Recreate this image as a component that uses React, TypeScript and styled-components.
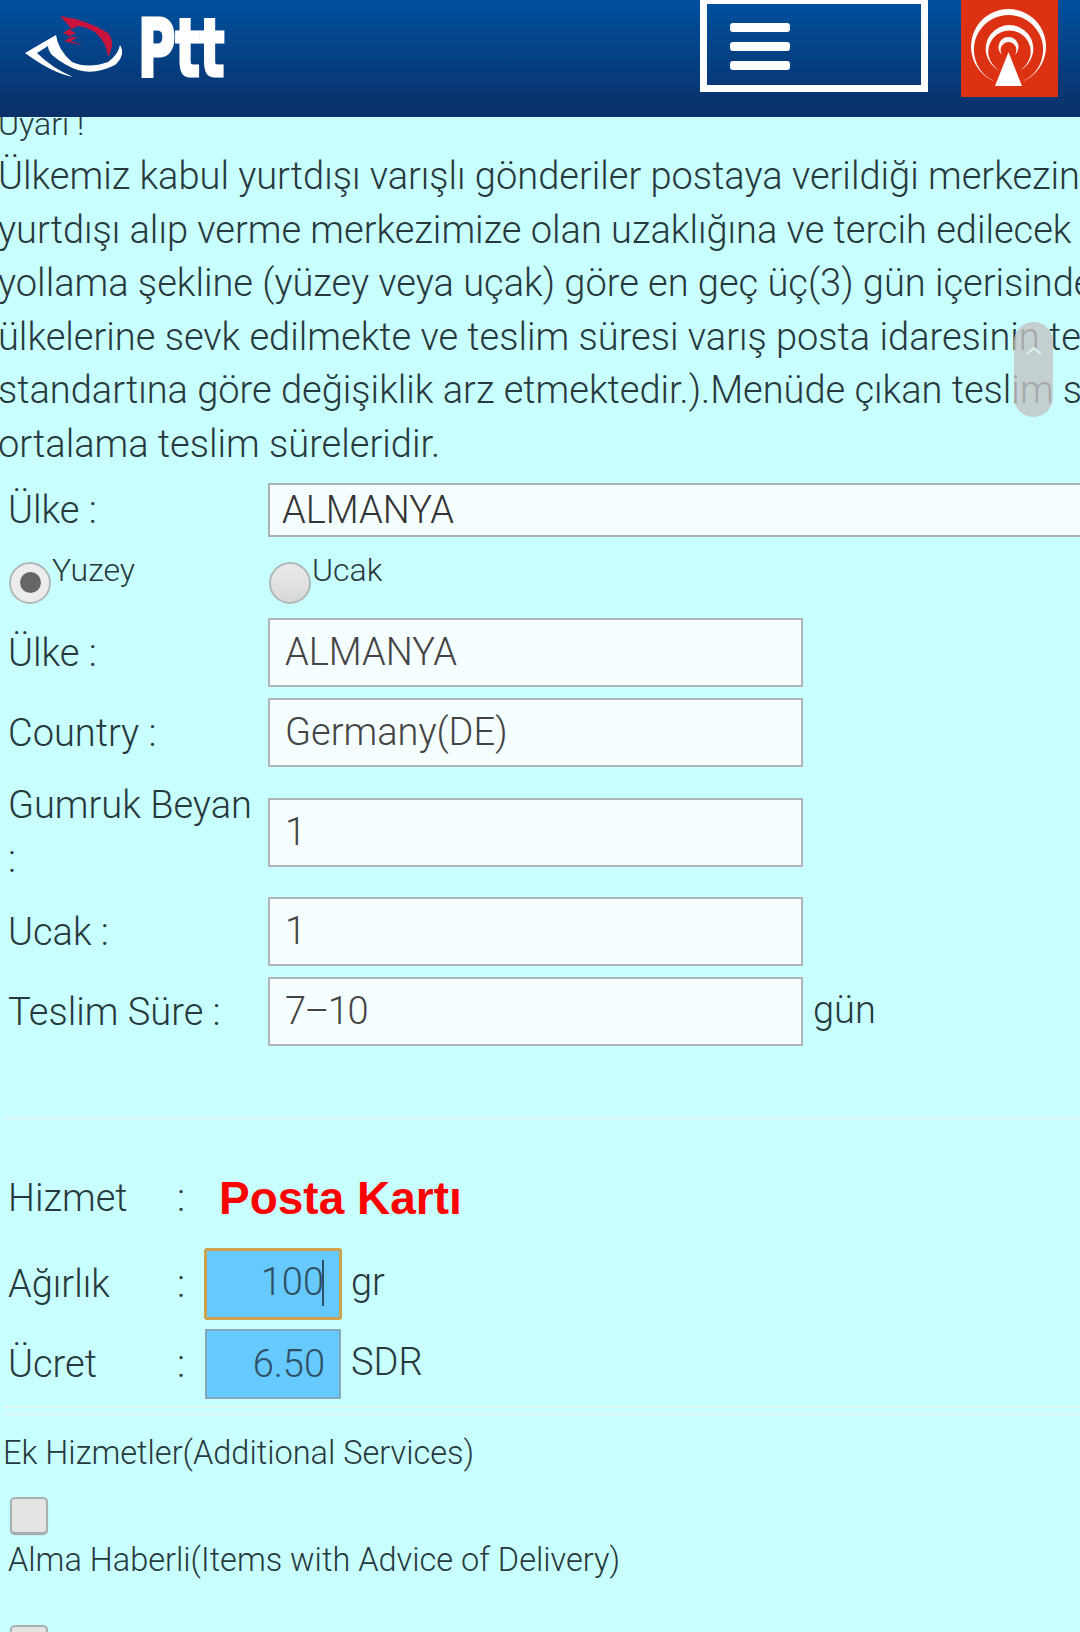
import { createGlobalStyle, styled } from 'styled-components';

const GlobalStyle = createGlobalStyle`
  html, body {
    margin: 0;
    padding: 0;
    background: #c8ffff;
    overflow: hidden;
  }
  body {
    width: 1080px;
    height: 1632px;
    font-family: Roboto, "Liberation Sans", sans-serif;
    font-weight: 300;
    color: #27393d;
  }
`;

const Page = styled.div`
  position: relative;
  width: 1080px;
  height: 1632px;
  overflow: hidden;
`;

const Header = styled.header`
  position: relative;
  z-index: 2;
  height: 117px;
  display: flex;
  align-items: flex-start;
  background: linear-gradient(#00509f, #0a3068);
`;

const Brand = styled.div`
  display: flex;
  align-items: flex-start;
  width: 700px;
  height: 92px;
  padding: 14px 0 0 22px;
  box-sizing: border-box;
`;

const BrandName = styled.span`
  margin: 3px 0 0 6px;
  font-family: "DejaVu Sans Condensed", "DejaVu Sans", sans-serif;
  font-weight: 700;
  font-size: 80px;
  line-height: 64px;
  color: #fff;
  -webkit-text-stroke: 3px #fff;
  transform: scaleX(0.71);
  transform-origin: left top;
`;

const MenuButton = styled.button`
  display: flex;
  flex-direction: column;
  gap: 10px;
  width: 228px;
  height: 92px;
  margin-right: 33px;
  padding: 19px 0 0 23px;
  box-sizing: border-box;
  background: transparent;
  border: 7px solid #fff;
  border-top-width: 4px;
`;

const MenuBar = styled.span`
  display: block;
  width: 60px;
  height: 9px;
  border-radius: 3px;
  background: #fff;
`;

const LiveButton = styled.div`
  width: 97px;
  height: 97px;
  background: #dc3213;
`;

const Content = styled.main`
  margin-top: -15px;
`;

const NoticeTitle = styled.div`
  margin: 0 0 4px -2px;
  font-size: 32px;
  line-height: 44px;
`;

const Notice = styled.p`
  margin: 0 0 8px -2px;
  font-size: 38px;
  line-height: 53.6px;
  white-space: nowrap;
`;

const FormRow = styled.div<{ $height: number }>`
  display: flex;
  align-items: center;
  height: ${(p) => p.$height}px;
  font-size: 38px;
`;

const FieldLabel = styled.label`
  box-sizing: border-box;
  flex: 0 0 268px;
  padding-left: 8px;
  line-height: 54px;
`;

const WideSelect = styled.div`
  box-sizing: border-box;
  flex: 0 0 900px;
  height: 54px;
  padding-left: 12px;
  line-height: 50px;
  color: #333;
  background: #f6ffff;
  border: 2px solid #aab0b0;
`;

const TextField = styled.div<{ $tight?: boolean }>`
  box-sizing: border-box;
  width: 535px;
  height: 69px;
  padding-left: 15px;
  line-height: 65px;
  letter-spacing: ${(p) => (p.$tight ? '-1.5px' : 'normal')};
  color: #444;
  background: #f6ffff;
  border: 2px solid #b0b4b4;
`;

const Suffix = styled.span<{ $gap: number }>`
  margin: 0 0 4px ${(p) => p.$gap}px;
`;

const RadioRow = styled.div`
  display: flex;
  height: 73px;
  font-size: 32px;
`;

const RadioOption = styled.div`
  display: flex;
  flex: 0 0 260px;
  gap: 1px;
  padding: 10px 0 0 9px;
  box-sizing: border-box;
  line-height: 40px;
`;

const RadioDot = styled.span<{ $checked?: boolean }>`
  box-sizing: border-box;
  display: flex;
  align-items: center;
  justify-content: center;
  width: 42px;
  height: 42px;
  margin-top: 12px;
  border-radius: 50%;
  border: 2px solid #b0b8b8;
  background: ${(p) => (p.$checked ? '#ececec' : 'linear-gradient(#eaeaea, #d8d8d8)')};

  &::after {
    content: '';
    display: ${(p) => (p.$checked ? 'block' : 'none')};
    width: 21px;
    height: 21px;
    border-radius: 50%;
    background: #666;
  }
`;

const Rule = styled.hr<{ $top: number }>`
  margin: ${(p) => p.$top}px 0 0 3px;
  height: 2px;
  border: 0;
  background: #dff3f3;
`;

const ServiceRow = styled.div<{ $height: number; $top?: number }>`
  display: flex;
  align-items: center;
  height: ${(p) => p.$height}px;
  margin-top: ${(p) => p.$top ?? 0}px;
  padding-left: 8px;
  font-size: 38px;
`;

const ServiceLabel = styled.span`
  width: 169px;
`;

const ServiceColon = styled.span`
  width: 27px;
`;

const ServiceName = styled.span`
  margin-left: 15px;
  font-family: "Liberation Sans", Arial, sans-serif;
  font-weight: 700;
  font-size: 46px;
  color: #f00;
`;

const AmountBox = styled.div<{ $focused?: boolean }>`
  box-sizing: border-box;
  width: ${(p) => (p.$focused ? 138 : 136)}px;
  height: ${(p) => (p.$focused ? 72 : 70)}px;
  margin-left: ${(p) => (p.$focused ? 0 : 1)}px;
  padding-right: ${(p) => (p.$focused ? 15 : 14)}px;
  text-align: right;
  line-height: ${(p) => (p.$focused ? 62 : 66)}px;
  color: #2f4f63;
  background: #66c9ff;
  border-style: solid;
  border-color: ${(p) => (p.$focused ? '#cda24f' : '#86a7b8')};
  border-width: ${(p) => (p.$focused ? 3 : 2)}px;
  border-radius: ${(p) => (p.$focused ? 3 : 0)}px;
`;

const Caret = styled.span`
  display: inline-block;
  width: 2px;
  height: 46px;
  margin-left: -2px;
  vertical-align: -11px;
  background: #2f4f63;
`;

const ExtrasTitle = styled.div`
  margin-top: 16px;
  padding-left: 3px;
  font-size: 32.5px;
  line-height: 44px;
`;

const CheckBox = styled.span`
  display: block;
  box-sizing: border-box;
  width: 38px;
  height: 37px;
  margin-left: 10px;
  border-radius: 5px;
  border: 2px solid #a9b0b0;
  background: #e4e4e4;
  box-shadow: 0 1px 1px #98a0a0;
`;

const CheckLabel = styled.div`
  margin-top: 4px;
  padding-left: 8px;
  font-size: 32.5px;
  line-height: 44px;
`;

const ExtraItem = styled.div<{ $top: number }>`
  margin-top: ${(p) => p.$top}px;
`;

const ScrollThumb = styled.div`
  position: absolute;
  z-index: 3;
  top: 322px;
  left: 1014px;
  width: 39px;
  height: 95px;
  border-radius: 20px;
  display: flex;
  justify-content: center;
  padding-top: 24px;
  box-sizing: border-box;
  background: rgba(195, 195, 195, 0.8);
`;

const PttLogo = () => (
  <svg width="110" height="70" viewBox="22 14 110 70">
    <path
      d="M25 53 L56 35 Q58 50 72 62 Q88 69 108 62 Q118 55 120 45 Q126 55 115 65 Q95 75 78 70 Q65 66 52 55 Q48 50 48 46 L37 53 Q52 68 73 77 Q52 73 25 53 Z"
      fill="#fff"
    />
    <path
      d="M60 16 Q88 20 108 33 Q116 42 108 57 Q107 43 95 32 Q86 27 78 26 L70 30 L76 33 L67 37 L78 37 L71 41 L84 46 L64 41 L72 37 L63 33 L71 28 Z"
      fill="#c8143c"
    />
  </svg>
);

const LiveIcon = () => (
  <svg width="97" height="97" viewBox="0 0 97 97" fill="#fff">
    <path d="M33.5 81.3 A37.5 37.5 0 1 1 61.5 81.3 A34.6 34.6 0 1 0 33.5 81.3 Z" />
    <path d="M38.5 70.4 A23.8 23.8 0 1 1 58.5 70.4 A21.2 21.2 0 1 0 38.5 70.4 Z" />
    <path d="M41.5 55 A10 10 0 1 1 53.5 55 A7.9 7.9 0 1 0 41.5 55 Z" />
    <path d="M47.5 52 L34 86 L61 86 Z" />
  </svg>
);

const App = () => (
  <Page>
    <GlobalStyle />
    <Header>
      <Brand>
        <PttLogo />
        <BrandName>Ptt</BrandName>
      </Brand>
      <MenuButton aria-label="Menu">
        <MenuBar />
        <MenuBar />
        <MenuBar />
      </MenuButton>
      <LiveButton>
        <LiveIcon />
      </LiveButton>
    </Header>
    <Content>
      <NoticeTitle>Uyarı !</NoticeTitle>
      <Notice>
        Ülkemiz kabul yurtdışı varışlı gönderiler postaya verildiği merkezin
        <br />
        yurtdışı alıp verme merkezimize olan uzaklığına ve tercih edilecek
        <br />
        yollama şekline (yüzey veya uçak) göre en geç üç(3) gün içerisinde
        <br />
        ülkelerine sevk edilmekte ve teslim süresi varış posta idaresinin teslim
        <br />
        standartına göre değişiklik arz etmektedir.).Menüde çıkan teslim süreleri
        <br />
        ortalama teslim süreleridir.
      </Notice>
      <FormRow $height={60}>
        <FieldLabel>Ülke :</FieldLabel>
        <WideSelect>ALMANYA</WideSelect>
      </FormRow>
      <RadioRow>
        <RadioOption>
          <RadioDot $checked />
          Yuzey
        </RadioOption>
        <RadioOption>
          <RadioDot />
          Ucak
        </RadioOption>
      </RadioRow>
      <FormRow $height={80}>
        <FieldLabel>Ülke :</FieldLabel>
        <TextField>ALMANYA</TextField>
      </FormRow>
      <FormRow $height={80}>
        <FieldLabel>Country :</FieldLabel>
        <TextField>Germany(DE)</TextField>
      </FormRow>
      <FormRow $height={119}>
        <FieldLabel>
          Gumruk Beyan
          <br />:
        </FieldLabel>
        <TextField>1</TextField>
      </FormRow>
      <FormRow $height={80}>
        <FieldLabel>Ucak :</FieldLabel>
        <TextField>1</TextField>
      </FormRow>
      <FormRow $height={80}>
        <FieldLabel>Teslim Süre :</FieldLabel>
        <TextField $tight>7–10</TextField>
        <Suffix $gap={10}>gün</Suffix>
      </FormRow>
      <Rule $top={65} />
      <ServiceRow $height={92} $top={33}>
        <ServiceLabel>Hizmet</ServiceLabel>
        <ServiceColon>:</ServiceColon>
        <ServiceName>Posta Kartı</ServiceName>
      </ServiceRow>
      <ServiceRow $height={80}>
        <ServiceLabel>Ağırlık</ServiceLabel>
        <ServiceColon>:</ServiceColon>
        <AmountBox $focused>
          100
          <Caret />
        </AmountBox>
        <Suffix $gap={9}>gr</Suffix>
      </ServiceRow>
      <ServiceRow $height={80}>
        <ServiceLabel>Ücret</ServiceLabel>
        <ServiceColon>:</ServiceColon>
        <AmountBox>6.50</AmountBox>
        <Suffix $gap={10}>SDR</Suffix>
      </ServiceRow>
      <Rule $top={2} />
      <Rule $top={5} />
      <ExtrasTitle>Ek Hizmetler(Additional Services)</ExtrasTitle>
      <ExtraItem $top={22}>
        <CheckBox />
      </ExtraItem>
      <CheckLabel>Alma Haberli(Items with Advice of Delivery)</CheckLabel>
      <ExtraItem $top={43}>
        <CheckBox />
      </ExtraItem>
    </Content>
    <ScrollThumb>
      <svg width="16" height="10" viewBox="0 0 16 10">
        <path d="M1 8 L8 2 L15 8" fill="none" stroke="#e2f4f4" strokeWidth="2" />
      </svg>
    </ScrollThumb>
  </Page>
);

export default App;
